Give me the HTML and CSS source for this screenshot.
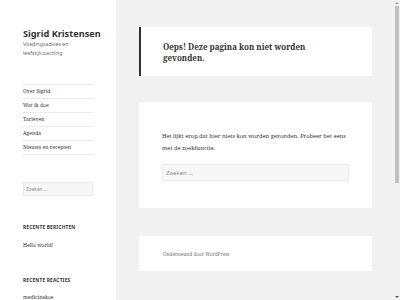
FILE: index.html
```html
<!DOCTYPE html>
<html lang="nl">
<head>
<meta charset="utf-8">
<title>Pagina niet gevonden – Sigrid Kristensen</title>
<link rel="stylesheet" href="styles.css">
</head>
<body>
<div class="page">
  <aside class="sidebar">
    <div class="site-title">Sigrid Kristensen</div>
    <p class="site-desc">Voedingsadvies en leefstijlcoaching</p>
    <nav>
      <ul class="menu">
        <li>Over Sigrid</li>
        <li>Wat ik doe</li>
        <li>Tarieven</li>
        <li>Agenda</li>
        <li>Nieuws en recepten</li>
      </ul>
    </nav>
    <div class="side-search"><input class="field small" type="search" placeholder="Zoeken ..."></div>
    <section class="widget">
      <h2 class="widget-title">Recente berichten</h2>
      <p class="widget-item">Hello world!</p>
    </section>
    <section class="widget">
      <h2 class="widget-title">Recente reacties</h2>
      <p class="widget-item">medicinskoe</p>
    </section>
  </aside>
  <main class="main">
    <header class="page-header">
      <h1 class="page-title">Oeps! Deze pagina kon niet worden gevonden.</h1>
    </header>
    <div class="page-content">
      <p class="lead">Het lijkt erop dat hier niets kon worden gevonden. Probeer het eens met de zoekfunctie.</p>
      <input class="field big" type="search" placeholder="Zoeken …">
    </div>
    <footer class="site-footer">Ondersteund door WordPress</footer>
  </main>
</div>
<div class="scrollbar">
  <span class="arrow up"></span>
  <span class="thumb"></span>
  <span class="arrow down"></span>
</div>
</body>
</html>
```
FILE: styles.css
```css
* { box-sizing: border-box; }
html, body { margin: 0; padding: 0; }
body {
  background: #f1f1f1;
  color: #333;
  font-family: "Noto Serif", "DejaVu Serif", serif;
  height: 300px;
  overflow: hidden;
}
.page { display: flex; align-items: flex-start; }
.sidebar {
  width: 116px;
  min-height: 300px;
  background: #fff;
  padding: 28px 23px 0 23px;
  flex: none;
}
.site-title {
  font-family: "Noto Sans", sans-serif;
  font-weight: 700;
  font-size: 9.2px;
  line-height: 12px;
  white-space: nowrap;
}
.site-desc {
  margin: 0;
  font-family: "Noto Sans", sans-serif;
  font-size: 5.2px;
  line-height: 8.6px;
  color: #707070;
}
.menu {
  list-style: none;
  margin: 27px 0 0;
  padding: 0;
  border-bottom: 1px solid #eaeaea;
}
.menu li {
  border-top: 1px solid #eaeaea;
  height: 14px;
  font-size: 5.1px;
  line-height: 13px;
}
.side-search { margin-top: 27px; }
.field {
  display: block;
  width: 100%;
  background: #f7f7f7;
  border: 1px solid #eaeaea;
  margin: 0;
  font-family: "Noto Sans", sans-serif;
  color: #707070;
  outline: none;
}
.field::placeholder { color: #8a8a8a; }
.field.small { height: 14px; font-size: 4.8px; padding: 0 2px; }
.field.big { height: 17px; font-size: 6px; padding: 0 3px; }
.widget { margin-top: 28px; }
.widget-title {
  margin: 0;
  font-family: "Noto Sans", sans-serif;
  font-weight: 700;
  font-size: 4.8px;
  line-height: 7px;
  letter-spacing: 0.04em;
  text-transform: uppercase;
}
.widget-item {
  margin: 9.5px 0 0;
  font-size: 5.1px;
  line-height: 8px;
}
.main {
  margin-left: 23px;
  width: 233px;
  padding-top: 27px;
}
.page-header {
  background: #fff;
  border-left: 2px solid #333;
  padding: 14px 24px 13px 22px;
}
.page-title {
  margin: 0;
  font-size: 8px;
  line-height: 11px;
  font-weight: 700;
}
.page-content {
  margin-top: 26px;
  background: #fff;
  padding: 29px 23px 27px 23px;
}
.lead {
  margin: 0 0 10px;
  font-size: 5.7px;
  line-height: 11.5px;
}
.site-footer {
  margin-top: 28px;
  background: #fff;
  padding: 14px 24px 12px;
  font-size: 4.7px;
  line-height: 9px;
  color: #707070;
}
.scrollbar {
  position: fixed;
  top: 0;
  right: 0;
  width: 6px;
  height: 300px;
  background: #f1f1f1;
}
.thumb {
  position: absolute;
  left: 1px;
  width: 4px;
  top: 6px;
  height: 177px;
  background: #c1c1c1;
}
.arrow {
  position: absolute;
  left: 1px;
  width: 0;
  height: 0;
  border-left: 2px solid transparent;
  border-right: 2px solid transparent;
}
.arrow.up { top: 2px; border-bottom: 2px solid #a3a3a3; }
.arrow.down { bottom: 2px; border-top: 2px solid #505050; }
```
